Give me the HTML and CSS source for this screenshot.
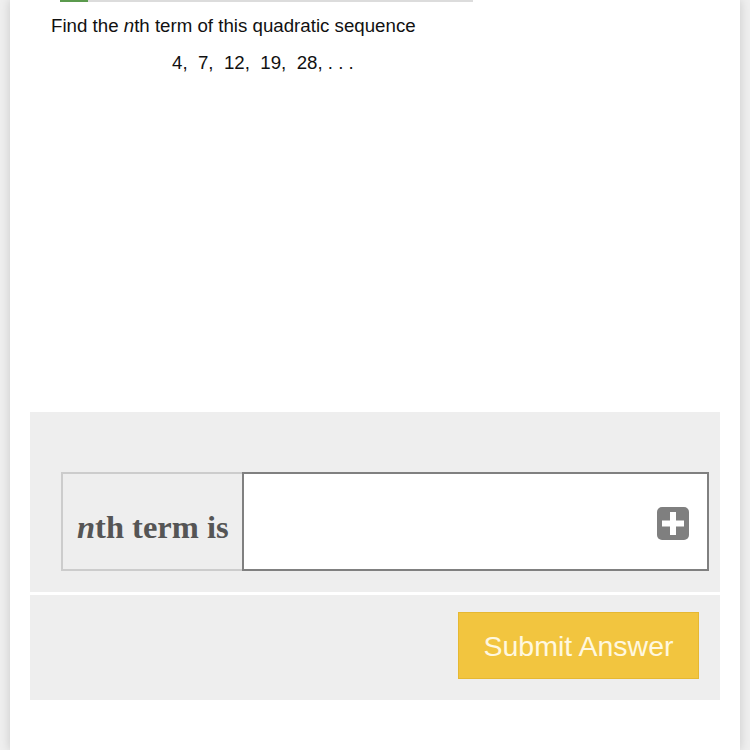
FILE: index.html
```html
<!DOCTYPE html>
<html lang="en">
<head>
  <meta charset="UTF-8" />
  <title>Quadratic sequence</title>
  <link rel="stylesheet" href="styles.css">
</head>
<body>
  <div class="card">
    <div class="progress"><div class="progress-fill"></div></div>

    <p class="question">Find the <i>n</i>th term of this quadratic sequence</p>
    <p class="sequence">4,&nbsp; 7,&nbsp; 12,&nbsp; 19,&nbsp; 28, . . .</p>

    <div class="answer-panel">
      <div class="answer-row">
        <div class="answer-label"><i>n</i>th term is</div>
        <div class="answer-input">
          <svg class="plus-icon" width="32" height="33" viewBox="0 0 32 33">
            <rect x="0" y="0" width="32" height="33" rx="5" fill="#7f7f7f"/>
            <rect x="13" y="5" width="6" height="23" fill="#fff"/>
            <rect x="5" y="13.5" width="22" height="6" fill="#fff"/>
          </svg>
        </div>
      </div>
    </div>

    <div class="submit-panel">
      <button class="submit-btn">Submit Answer</button>
    </div>
  </div>
</body>
</html>
```

FILE: styles.css
```css
* { box-sizing: border-box; }

body {
  margin: 0;
  min-height: 100vh;
  background: #efefef;
  font-family: 'Liberation Sans', Arial, sans-serif;
}

.card {
  background: white;
  margin: 0 10px;
  min-height: 750px;
  box-shadow: 0 0 10px rgba(0, 0, 0, 0.16);
}

.progress {
  margin-left: 50px;
  width: 413px;
  height: 2px;
  background: #dcdcdc;
}

.progress-fill {
  width: 28px;
  height: 2px;
  background: #5b9a4d;
}

.question {
  margin: 0;
  padding: 13px 0 0 41px;
  font-size: 18.7px;
  line-height: 22px;
  color: #111;
}

.sequence {
  margin: 0;
  padding: 15px 0 0 162px;
  font-size: 18.7px;
  line-height: 22px;
  color: #111;
}

.answer-panel {
  margin: 338px 20px 0;
  height: 180px;
  background: #eeeeee;
  padding: 60px 11px 0 31px;
}

.answer-row {
  display: flex;
  height: 99px;
}

.answer-label {
  width: 181px;
  border: 2px solid #cccccc;
  border-right: none;
  background: #eeeeee;
  display: flex;
  align-items: center;
  padding: 11px 0 0 14px;
  font-family: 'Liberation Serif', 'Times New Roman', serif;
  font-weight: bold;
  font-size: 32.5px;
  color: #555;
}

.answer-input {
  flex: 1;
  background: white;
  border: 2px solid #808080;
  display: flex;
  align-items: center;
  justify-content: flex-end;
  padding: 0 18px 0 0;
}

.plus-icon {
  display: block;
  margin-top: 4px;
}

.submit-panel {
  margin: 3px 20px 0;
  height: 105px;
  background: #eeeeee;
  display: flex;
  justify-content: flex-end;
  align-items: flex-start;
  padding: 17px 21px 0 0;
}

.submit-btn {
  width: 241px;
  height: 67px;
  background: #f2c53f;
  border: 1px solid #e6b832;
  color: #fff8e0;
  font-family: 'Liberation Sans', Arial, sans-serif;
  font-size: 28.5px;
  cursor: pointer;
  padding: 2px 0 0;
}
```
